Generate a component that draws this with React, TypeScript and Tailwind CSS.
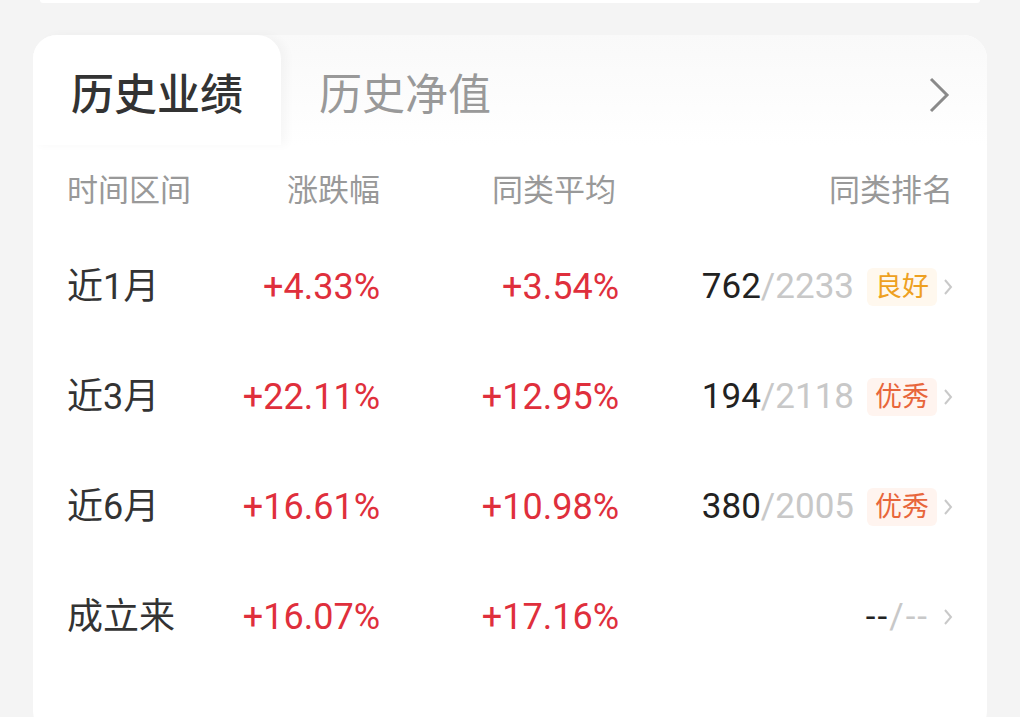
import React from "react";

const font = { fontFamily: 'Roboto, "Noto Sans CJK SC", sans-serif' };

type Row = {
  label: string;
  change: string;
  avg: string;
  rank?: string;
  total?: string;
  badge?: "良好" | "优秀";
};

const rows: Row[] = [
  { label: "近1月", change: "+4.33%", avg: "+3.54%", rank: "762", total: "2233", badge: "良好" },
  { label: "近3月", change: "+22.11%", avg: "+12.95%", rank: "194", total: "2118", badge: "优秀" },
  { label: "近6月", change: "+16.61%", avg: "+10.98%", rank: "380", total: "2005", badge: "优秀" },
  { label: "成立来", change: "+16.07%", avg: "+17.16%" },
];

const SmallChevron = () => (
  <svg width="10" height="18" viewBox="0 0 10 18" className="ml-[6px] shrink-0">
    <polyline points="2,2 8,9 2,16" fill="none" stroke="#c9c9c9" strokeWidth="2" />
  </svg>
);

const Badge = ({ text }: { text: "良好" | "优秀" }) => {
  const good = text === "良好";
  return (
    <div
      className={
        good
          ? "ml-[13px] flex h-[38px] items-center rounded-[6px] bg-[#fff8ee] px-[8px] text-[27px] text-[#eea021]"
          : "ml-[13px] flex h-[38px] items-center rounded-[6px] bg-[#fff4ef] px-[8px] text-[27px] text-[#e8663b]"
      }
    >
      {text}
    </div>
  );
};

export default function App() {
  return (
    <div className="min-h-[717px] w-[1020px] overflow-hidden bg-[#f4f4f4]" style={font}>
      <div className="mx-[40px] h-[3px] rounded-b-[20px] bg-white" />
      <div className="mx-[33px] mt-[32px] h-[700px] rounded-[24px] bg-white">
        <div className="flex h-[110px] items-stretch rounded-t-[24px] bg-gradient-to-b from-[#f9f9f9] to-white">
          <div className="flex w-[248px] items-center justify-center rounded-t-[24px] bg-white pt-[10px] text-[43px] font-medium text-[#333] shadow-[6px_0_10px_rgba(0,0,0,0.03)]">
            历史业绩
          </div>
          <div className="flex w-[248px] items-center justify-center pt-[10px] text-[43px] text-[#999]">
            历史净值
          </div>
          <div className="flex flex-1 items-center justify-end pr-[37px] pt-[10px]">
            <svg width="22" height="36" viewBox="0 0 22 36">
              <polyline points="3,2 19,18 3,34" fill="none" stroke="#8a8a8a" strokeWidth="3" />
            </svg>
          </div>
        </div>

        <div className="px-[34px]">
          <div className="flex h-[87px] items-center pt-[5px] text-[31px] text-[#999]">
            <div className="w-[150px]">时间区间</div>
            <div className="w-[163px] text-right">涨跌幅</div>
            <div className="w-[236px] text-right">同类平均</div>
            <div className="flex-1 text-right">同类排名</div>
          </div>

          {rows.map(r => (
            <div key={r.label} className="flex h-[110px] items-center">
              <div className="w-[150px] text-[36px] text-[#333]">{r.label}</div>
              <div className="w-[163px] text-right text-[36px] text-[#df2f3c]">{r.change}</div>
              <div className="w-[239px] text-right text-[36px] text-[#df2f3c]">{r.avg}</div>
              <div className="flex flex-1 items-center justify-end">
                {r.rank ? (
                  <>
                    <span className="text-[35px] text-[#222]">{r.rank}</span>
                    <span className="text-[35px] text-[#c8c8c8]">/{r.total}</span>
                    {r.badge && <Badge text={r.badge} />}
                  </>
                ) : (
                  <>
                    <span className="text-[35px] tracking-[2px] text-[#222]">--</span>
                    <span className="text-[35px] tracking-[2px] text-[#c8c8c8]">/--</span>
                    <span className="w-[8px]" />
                  </>
                )}
                <SmallChevron />
              </div>
            </div>
          ))}
        </div>
      </div>
    </div>
  );
}
